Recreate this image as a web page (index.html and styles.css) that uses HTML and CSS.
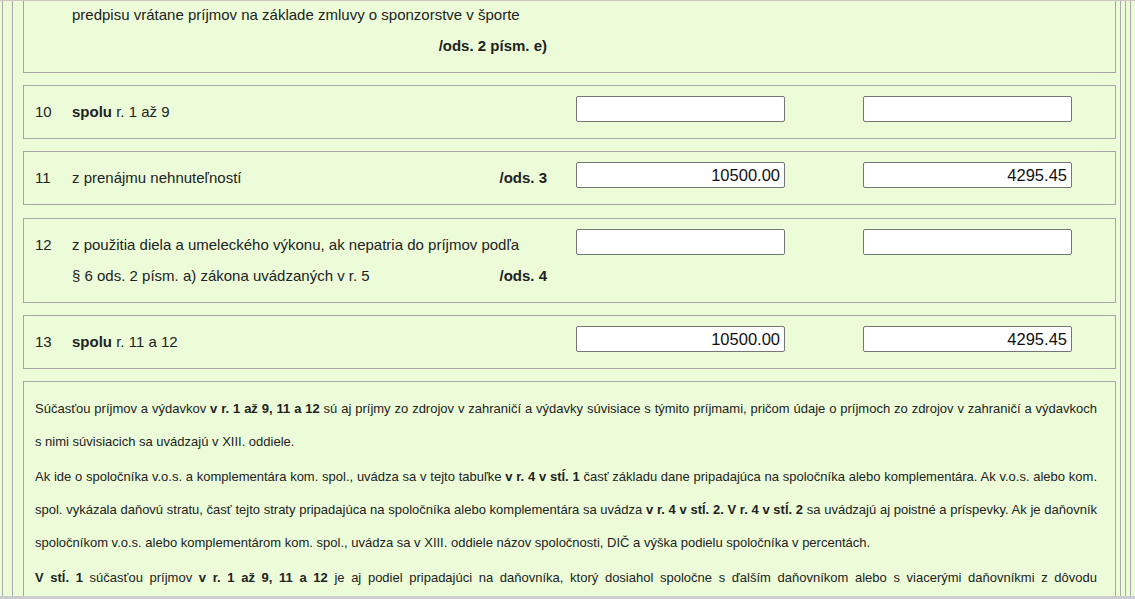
FILE: index.html
```html
<!DOCTYPE html>
<html lang="sk">
<head>
<meta charset="utf-8">
<title>Príjmy</title>
<link rel="stylesheet" href="styles.css">
</head>
<body>
<div class="topline"></div>
<div class="viewport">
  <div class="frame-outer">
    <div class="frame-mid">
      <div class="frame-inner">

        <div class="box row first">
          <div class="num"></div>
          <div class="desc">
            <div class="line">predpisu vrátane príjmov na základe zmluvy o sponzorstve v športe</div>
            <div class="line right"><b>/ods. 2 písm. e)</b></div>
          </div>
        </div>

        <div class="box row">
          <div class="num">10</div>
          <div class="desc">
            <div class="line"><span><b>spolu</b> r. 1 až 9</span></div>
          </div>
          <input class="in in1" type="text" value="">
          <input class="in in2" type="text" value="">
        </div>

        <div class="box row gap13">
          <div class="num">11</div>
          <div class="desc">
            <div class="line"><span>z prenájmu nehnuteľností</span><b>/ods. 3</b></div>
          </div>
          <input class="in in1" type="text" value="10500.00">
          <input class="in in2" type="text" value="4295.45">
        </div>

        <div class="box row">
          <div class="num">12</div>
          <div class="desc">
            <div class="line"><span>z použitia diela a umeleckého výkonu, ak nepatria do príjmov podľa</span></div>
            <div class="line"><span>§ 6 ods. 2 písm. a) zákona uvádzaných v r. 5</span><b>/ods. 4</b></div>
          </div>
          <input class="in in1" type="text" value="">
          <input class="in in2" type="text" value="">
        </div>

        <div class="box row">
          <div class="num">13</div>
          <div class="desc">
            <div class="line"><span><b>spolu</b> r. 11 a 12</span></div>
          </div>
          <input class="in in1" type="text" value="10500.00">
          <input class="in in2" type="text" value="4295.45">
        </div>

        <div class="box note">
          <p>Súčasťou príjmov a výdavkov <b>v r. 1 až 9, 11 a 12</b> sú aj príjmy zo zdrojov v zahraničí a výdavky súvisiace s týmito príjmami, pričom údaje o príjmoch zo zdrojov v zahraničí a výdavkoch s nimi súvisiacich sa uvádzajú v XIII. oddiele.</p>
          <p>Ak ide o spoločníka v.o.s. a komplementára kom. spol., uvádza sa v tejto tabuľke <b>v r. 4 v stĺ. 1</b> časť základu dane pripadajúca na spoločníka alebo komplementára. Ak v.o.s. alebo kom. spol. vykázala daňovú stratu, časť tejto straty pripadajúca na spoločníka alebo komplementára sa uvádza <b>v r. 4 v stĺ. 2. V r. 4 v stĺ. 2</b> sa uvádzajú aj poistné a príspevky. Ak je daňovník spoločníkom v.o.s. alebo komplementárom kom. spol., uvádza sa v XIII. oddiele názov spoločnosti, DIČ a výška podielu spoločníka v percentách.</p>
          <p><b>V stĺ. 1</b> súčasťou príjmov <b>v r. 1 až 9, 11 a 12</b> je aj podiel pripadajúci na daňovníka, ktorý dosiahol spoločne s ďalším daňovníkom alebo s viacerými daňovníkmi z dôvodu spoluvlastníctva alebo z iného dôvodu, a to podľa výšky spoluvlastníckeho podielu alebo podľa dohody.</p>
        </div>

      </div>
    </div>
  </div>
</div>
<div class="bottombar"></div>
</body>
</html>
```

FILE: styles.css
```css
html, body {
  margin: 0;
  padding: 0;
}

body {
  height: 599px;
  overflow: hidden;
  display: flex;
  flex-direction: column;
  background: #ecfcd9;
  color: #222;
  font-family: "Liberation Sans", Arial, sans-serif;
  font-size: 15px;
}

.topline {
  flex: none;
  height: 1px;
  background: #cfc6be;
}

.viewport {
  flex: 1;
  overflow: hidden;
}

.bottombar {
  flex: none;
  height: 3px;
  background: #cdcdcd;
}

.frame-outer {
  margin: 0 4px 0 2px;
  border-left: 1px solid #aaa;
  border-right: 1px solid #aaa;
}

.frame-mid {
  margin: 0 4px 0 9px;
  border-left: 1px solid #aaa;
  border-right: 1px solid #aaa;
}

.frame-inner {
  margin-right: 4px;
  border-right: 1px solid #aaa;
  padding: 0 4px 0 10px;
}

.box {
  border: 1px solid #a6a6a6;
  margin-bottom: 12px;
}

.box.gap13 {
  margin-bottom: 13px;
}

.row {
  display: flex;
  align-items: flex-start;
  padding: 10px 0 11px 11px;
}

.row.first {
  border-top: none;
  margin-top: -2px;
  padding-top: 0;
  padding-bottom: 11px;
}

.num {
  flex: none;
  width: 37px;
  line-height: 31px;
}

.desc {
  flex: none;
  width: 475px;
}

.line {
  display: flex;
  justify-content: space-between;
  line-height: 31px;
  white-space: nowrap;
}

.line.right {
  justify-content: flex-end;
}

.in {
  flex: none;
  box-sizing: border-box;
  width: 209px;
  height: 26px;
  border: 1px solid #767676;
  border-radius: 2px;
  background: #fff;
  padding: 1px 4px;
  margin: 0;
  text-align: right;
  font-family: "Liberation Sans", Arial, sans-serif;
  font-size: 16.5px;
  color: #111;
}

.in1 {
  margin-left: 29px;
}

.in2 {
  margin-left: 78px;
}

.note {
  padding: 10px 18px 10px 11px;
  font-size: 13px;
  line-height: 33px;
  text-align: justify;
}

.note p {
  margin: 0 0 2px;
}
```
